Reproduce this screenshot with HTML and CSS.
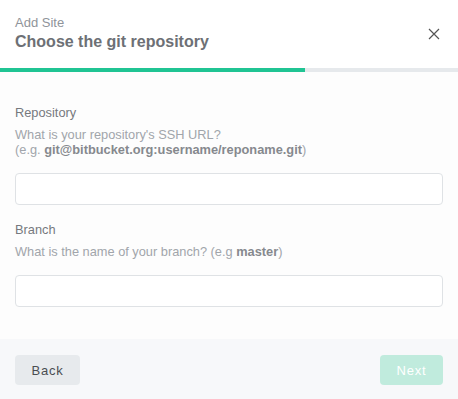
FILE: index.html
```html
<!DOCTYPE html>
<html lang="en">
<head>
    <meta charset="UTF-8">
    <meta name="viewport" content="width=device-width, initial-scale=1.0">
    <title>Add Site</title>
    <link rel="stylesheet" href="styles.css">
</head>
<body>

    <div class="modal">
        <!-- Header -->
        <div class="modal-header">
            <div class="titles">
                <div class="subtitle">Add Site</div>
                <h1>Choose the git repository</h1>
            </div>
            <button class="close-btn" aria-label="Close">
                <svg width="12" height="12" viewBox="0 0 12 12">
                    <path d="M1 1 L11 11 M11 1 L1 11" stroke="#555" stroke-width="1.2" fill="none"/>
                </svg>
            </button>
        </div>

        <!-- Step progress -->
        <div class="progress">
            <div class="progress-fill" style="width: 305px;"></div>
        </div>

        <!-- Form -->
        <form class="modal-body">
            <label for="repo">Repository</label>
            <p class="help">What is your repository's SSH URL?<br>(e.g. <b>git@bitbucket.org:username/reponame.git</b>)</p>
            <input type="text" id="repo" name="repo">

            <label for="branch">Branch</label>
            <p class="help">What is the name of your branch? (e.g <b>master</b>)</p>
            <input type="text" id="branch" name="branch">
        </form>

        <!-- Footer -->
        <div class="modal-footer">
            <button class="back-btn">Back</button>
            <button class="next-btn" disabled>Next</button>
        </div>
    </div>

</body>
</html>
```

FILE: styles.css
```css
body {
    margin: 0;
    font-family: "Liberation Sans", Arial, sans-serif;
    background-color: #fdfdfd;
}

.modal {
    width: 458px;
    height: 399px;
    display: flex;
    flex-direction: column;
    background-color: #fdfdfd;
}

.modal-header {
    display: flex;
    justify-content: space-between;
    align-items: center;
    padding: 15px 15px 17px 15px;
    background-color: #fff;
}

.subtitle {
    font-size: 13px;
    line-height: 15px;
    color: #8f949a;
}

h1 {
    margin: 2px 0 0 0;
    font-size: 16px;
    line-height: 19px;
    font-weight: bold;
    color: #6d7075;
}

.close-btn {
    background: none;
    border: none;
    padding: 0;
    margin-right: 3px;
    margin-top: 1px;
    width: 12px;
    height: 12px;
    cursor: pointer;
}

.close-btn svg {
    display: block;
}

.progress {
    height: 4px;
    background-color: #e6e9ec;
}

.progress-fill {
    height: 100%;
    background-color: #20c493;
}

.modal-body {
    flex: 1;
    padding: 33px 15px 0 15px;
}

label {
    display: block;
    font-size: 12.8px;
    line-height: 15px;
    color: #76797e;
}

.help {
    margin: 7px 0 16px 0;
    font-size: 12.8px;
    line-height: 15px;
    color: #a1a5ab;
}

.help b {
    color: #86898e;
}

input[type="text"] {
    display: block;
    box-sizing: border-box;
    width: 428px;
    height: 32px;
    margin: 0 0 17px 0;
    padding: 0 10px;
    border: 1px solid #dfe2e5;
    border-radius: 4px;
    background-color: #fff;
    font-size: 13px;
}

.modal-footer {
    display: flex;
    justify-content: space-between;
    padding: 16px 15px 14px 15px;
    background-color: #f7f8fa;
}

.back-btn, .next-btn {
    height: 30px;
    border: none;
    border-radius: 4px;
    font-family: "Liberation Sans", Arial, sans-serif;
    font-size: 13px;
    letter-spacing: 0.8px;
    cursor: pointer;
}

.back-btn {
    width: 65px;
    background-color: #e7eaed;
    color: #4a4d52;
}

.next-btn {
    width: 63px;
    background-color: #c0ebdd;
    color: #fff;
    cursor: default;
}
```
